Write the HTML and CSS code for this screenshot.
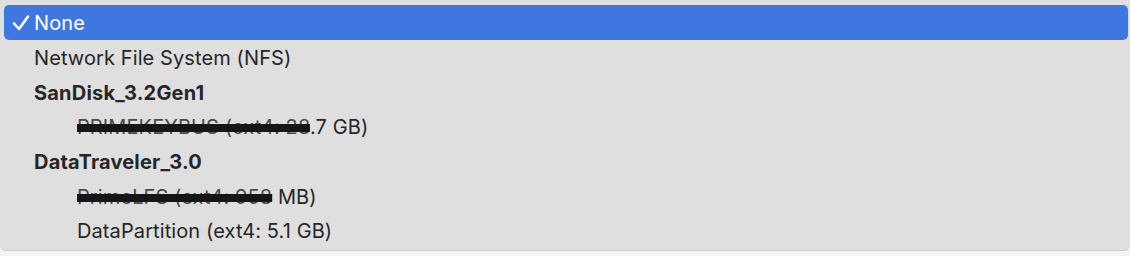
FILE: index.html
```html
<!DOCTYPE html>
<html>
<head>
<meta charset="utf-8">
<link rel="stylesheet" href="styles.css">
</head>
<body>
<div class="menu">
  <div class="item selected"><svg class="check" width="18" height="18" viewBox="0 0 18 18"><polyline points="2,9.5 7,15 16,2.5" fill="none" stroke="#ffffff" stroke-width="2.6" stroke-linecap="round" stroke-linejoin="round"/></svg><span class="label">None</span></div>
  <div class="item"><span class="label">Network File System (NFS)</span></div>
  <div class="item group"><span class="label">SanDisk_3.2Gen1</span></div>
  <div class="item child"><span class="label"><span class="redact">PRIMEKEYBUS (ext4: 28</span>.7 GB)</span></div>
  <div class="item group"><span class="label">DataTraveler_3.0</span></div>
  <div class="item child"><span class="label"><span class="redact">PrimeLFS (ext4: 958</span> MB)</span></div>
  <div class="item child"><span class="label">DataPartition (ext4: 5.1 GB)</span></div>
</div>
<div class="below"></div>
</body>
</html>
```
FILE: styles.css
```css
html, body {
  margin: 0;
  padding: 0;
  background: #f4f4f5;
  font-family: Inter, "Liberation Sans", Arial, sans-serif;
}
.menu {
  width: 1130px;
  height: 251px;
  box-sizing: border-box;
  padding: 5px 2px 0 4px;
  background: #dfdfe0;
  border-bottom: 1px solid #cfcfd1;
  border-radius: 0 0 6px 6px;
  display: flex;
  flex-direction: column;
}
.item {
  height: 34.7px;
  display: flex;
  align-items: center;
  padding-left: 30px;
  font-size: 20px;
  letter-spacing: 0.1px;
  color: #262626;
  position: relative;
  border-radius: 5px;
}
.label { position: relative; top: 1px; }
.item.selected {
  background: #3e77e0;
  color: #ffffff;
}
.check {
  position: absolute;
  left: 8px;
  top: 9px;
}
.group { font-weight: 700; letter-spacing: 0.2px; }
.child { padding-left: 73px; }
.redact {
  color: #4a4a4a;
  text-decoration: line-through;
  text-decoration-thickness: 8px;
  text-decoration-color: #161616;
}
.below {
  height: 5px;
}
```
